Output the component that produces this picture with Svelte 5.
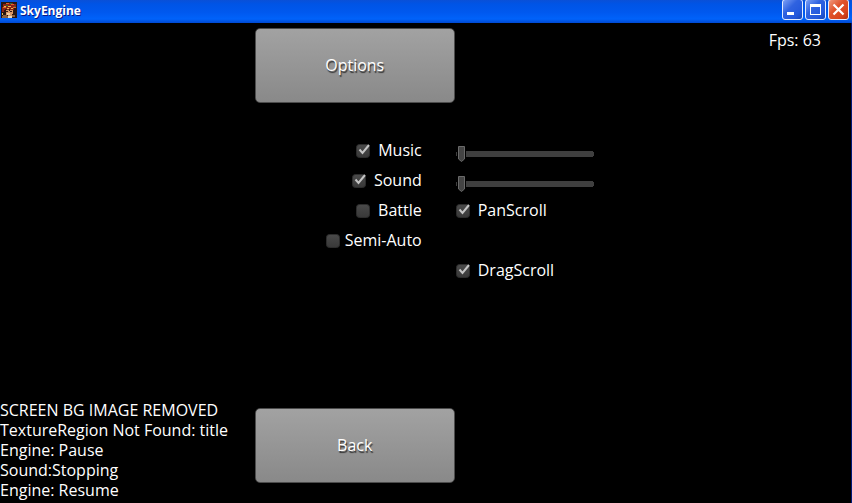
<script>
  let left = $state([
    { id: 'music', label: 'Music', on: true, gap: 'wide' },
    { id: 'sound', label: 'Sound', on: true, gap: 'wide' },
    { id: 'battle', label: 'Battle', on: false, gap: 'wide' },
    { id: 'semi', label: 'Semi-Auto', on: false, gap: 'tight' }
  ]);
  let right = $state([
    { id: 'musicVolume', kind: 'slider', label: 'Music volume', value: 0 },
    { id: 'soundVolume', kind: 'slider', label: 'Sound volume', value: 0 },
    { id: 'pan', kind: 'check', label: 'PanScroll', on: true },
    { id: 'blank', kind: 'blank' },
    { id: 'drag', kind: 'check', label: 'DragScroll', on: true }
  ]);
  const log = [
    'SCREEN BG IMAGE REMOVED',
    'TextureRegion Not Found: title',
    'Engine: Pause',
    'Sound:Stopping',
    'Engine: Resume'
  ];
</script>

{#snippet box(on)}
  <svg class="box" viewBox="0 0 16 16" width="16" height="16" aria-hidden="true">
    <rect x="1.5" y="2.5" width="13" height="13" rx="3" fill="url(#face)" stroke="#2c2c2c" />
    {#if on}<path d="M4.500 7.500L7.500 11L14 3" fill="none" stroke="#c4c4c4" stroke-width="2" />{/if}
  </svg>
{/snippet}

<div class="window">
  <header>
    <svg class="logo" viewBox="0 0 16 16" width="16" height="16" aria-hidden="true" shape-rendering="crispEdges">
      <rect width="16" height="16" fill="#2a1712" />
      <path fill="#8d2118" d="M2 2h3V1h7v1h3v4h-2v2H3v2H1V5h1z" />
      <path fill="#e0622a" d="M5 1h3v1H5zM10 2h3v1h-3zM2 5h3v1H2zM12 5h3v1h-3z" />
      <path fill="#2c7a3a" d="M5 3h2v1H5zM9 1h2v1H9zM13 4h1v1h-1z" />
      <path fill="#e8bd4c" d="M3 4h2v1H3zM7 4h3v1H7zM6 6h2v1H6zM10 6h2v1h-2zM1 11h1v2H1z" />
      <path fill="#d99a68" d="M5 8h7v4h-1v2H7v-1H5z" />
      <path fill="#3b1b14" d="M5 9h2v1H5zM9 9h2v1H9zM4 7h2v1H4zM8 7h1v2H8z" />
      <path fill="#f3cfa0" d="M6 11h3v2H6z" />
      <path fill="#8a6240" d="M2 13h4v1h2v2H1v-2h1zM11 13h3v2h-3z" />
      <path fill="#e7d6ba" d="M7 14h4v2H7z" />
    </svg>
    <h1>SkyEngine</h1>
    <div class="controls">
      <button aria-label="Minimize">
        <svg viewBox="0 0 21 21" width="21" height="21"><path fill="#fff" d="M5 13h7v3H5z" /></svg>
      </button>
      <button aria-label="Maximize">
        <svg viewBox="0 0 21 21" width="21" height="21"><path fill="#fff" fill-rule="evenodd" d="M5 5h11v11H5zM6 8v7h9V8z" /></svg>
      </button>
      <button class="close" aria-label="Close">
        <svg viewBox="0 0 21 21" width="21" height="21"><path d="M5.500 5.500l10 10M15.500 5.500l-10 10" stroke="#fff" stroke-width="2.2" /></svg>
      </button>
    </div>
  </header>

  <main>
    <button class="big">Options</button>
    <p class="fps">Fps: 63</p>

    <div class="left">
      {#each left as item (item.id)}
        <label class="row {item.gap}">
          <input type="checkbox" bind:checked={item.on} />
          {@render box(item.on)}
          <span>{item.label}</span>
        </label>
      {/each}
    </div>

    <div class="right">
      {#each right as item (item.id)}
        {#if item.kind === 'slider'}
          <div class="row">
            <input type="range" min="0" max="100" aria-label={item.label} bind:value={item.value} />
          </div>
        {:else if item.kind === 'check'}
          <label class="row wide">
            <input type="checkbox" bind:checked={item.on} />
            {@render box(item.on)}
            <span>{item.label}</span>
          </label>
        {:else}
          <div class="row"></div>
        {/if}
      {/each}
    </div>

    <div class="log">
      {#each log as line}<p>{line}</p>{/each}
    </div>
    <button class="big back">Back</button>
  </main>

  <svg class="defs" width="0" height="0" aria-hidden="true">
    <linearGradient id="face" x1="0" y1="0" x2="0" y2="1">
      <stop offset="0" stop-color="#4a4a4a" />
      <stop offset="1" stop-color="#383838" />
    </linearGradient>
  </svg>
</div>

<style>
  :global(body) {
    margin: 0;
    background: #000;
  }
  .window {
    box-sizing: border-box;
    display: flex;
    flex-direction: column;
    min-height: 100vh;
    border-right: 1px solid #001a78;
    background: #000;
    color: #fff;
    font: 16px/20px 'Open Sans', 'Noto Sans', sans-serif;
  }
  p,
  h1 {
    margin: 0;
  }
  header {
    display: flex;
    align-items: center;
    height: 23px;
    margin-right: -1px;
    padding: 0 3px 0 1px;
    box-sizing: border-box;
    background: linear-gradient(#0a50d8, #0054e6 4px, #0058ee 12px, #0062fa 19px, #0048d0);
  }
  .logo {
    margin-bottom: 4px;
  }
  h1 {
    flex: 1;
    margin: 0 0 1px 3px;
    font: bold 12px/16px 'Open Sans', 'Noto Sans', sans-serif;
    text-shadow: 1px 1px #0a1883;
  }
  .controls {
    display: flex;
    gap: 2px;
    margin-bottom: 4px;
  }
  .controls button {
    box-sizing: border-box;
    width: 21px;
    height: 21px;
    padding: 0;
    border: 1px solid #e4ecff;
    border-radius: 3px;
    background: linear-gradient(135deg, #7da0f5, #2f62e0 40%, #2458dc 75%, #1746b8);
  }
  .controls .close {
    background: linear-gradient(135deg, #f0997d, #e0532c 40%, #d8451d 75%, #b03010);
  }
  .controls svg {
    display: block;
    margin: -1px;
  }
  main {
    flex: 1;
    display: grid;
    grid-template-columns: 9fr 200px 14fr;
    grid-template-rows: auto 1fr auto;
    padding-top: 5px;
  }
  .big {
    grid-column: 2;
    height: 75px;
    padding: 0 0 2px;
    border: 1px solid #4c4c4c;
    border-radius: 5px;
    background: linear-gradient(#a2a2a2, #898989);
    color: #fff;
    font: inherit;
    text-shadow: 1px 2px 1px #333;
  }
  .fps {
    grid-column: 3;
    justify-self: end;
    margin: 2px 30px 0 0;
  }
  .left {
    grid-column: 1 / 3;
    grid-row: 2;
    display: flex;
    flex-direction: column;
    align-items: flex-end;
    padding: 32px 33px 0 0;
  }
  .right {
    grid-column: 3;
    grid-row: 2;
    padding-top: 32px;
  }
  .row {
    position: relative;
    display: flex;
    align-items: center;
    height: 30px;
  }
  .wide {
    gap: 7px;
  }
  .tight {
    gap: 4px;
  }
  .row input[type='checkbox'] {
    position: absolute;
    left: 0;
    width: 16px;
    height: 16px;
    margin: 0;
    opacity: 0;
  }
  input[type='range'] {
    appearance: none;
    width: 138px;
    height: 18px;
    margin: 7px 0 0 1px;
    background: linear-gradient(#3f3f3f, #3f3f3f) 1px 50% / calc(100% - 2px) 6px no-repeat,
      linear-gradient(#3f3f3f, #3f3f3f) 0 50% / 100% 4px no-repeat;
  }
  input[type='range']::-webkit-slider-thumb {
    appearance: none;
    width: 10px;
    height: 16px;
    border: 0;
    background: url("data:image/svg+xml,%3Csvg xmlns='http://www.w3.org/2000/svg' width='10' height='16'%3E%3Cpath d='M1 0h9v16H1z'/%3E%3Cpath d='M2.5 .5h6v12.500l-3 2.500-3-2.500z' fill='%23444' stroke='%236a6a6a'/%3E%3C/svg%3E") no-repeat;
  }
  .log {
    grid-column: 1;
    grid-row: 3;
    padding-bottom: 3px;
    white-space: nowrap;
  }
  .back {
    grid-row: 3;
    align-self: end;
    margin-bottom: 20px;
  }
  .defs {
    position: absolute;
  }
</style>
